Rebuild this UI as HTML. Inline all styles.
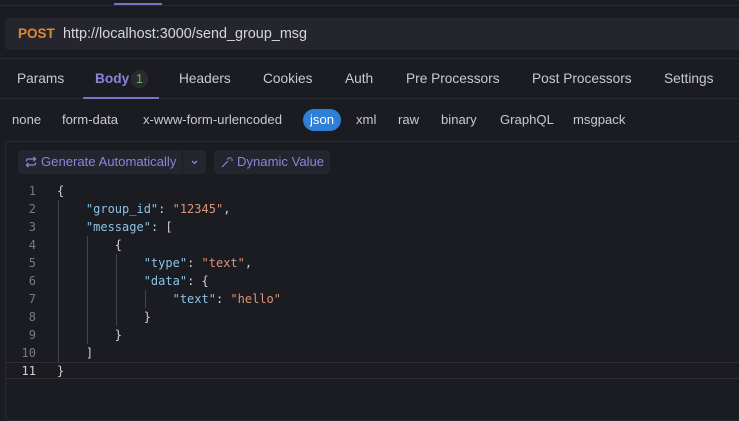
<!DOCTYPE html>
<html><head><meta charset="utf-8"><style>
*{margin:0;padding:0;box-sizing:border-box}
body{width:739px;height:411px;background:#1b1b22;font-family:"Liberation Sans",sans-serif;color:#c9c9d0;position:relative;overflow:hidden;font-size:13.7px}
.abs{position:absolute}
.t{font-size:13.1px;top:112px}
.code{font-family:"DejaVu Sans Mono","Liberation Mono",monospace;font-size:12px;white-space:pre}
.ln{position:absolute;left:0;width:36px;text-align:right;color:#7a7a82}
.k{color:#8cc2e8}.s{color:#d9967a}.p{color:#d0d0d4}
.g{position:absolute;width:1px;background:#44444c}
</style></head><body>
<div class="abs" style="left:0;top:5px;width:739px;height:1px;background:#2a2a33"></div>
<div class="abs" style="left:114px;top:3px;width:48px;height:2px;background:#7a74c8"></div>
<div class="abs" style="left:5px;top:18px;width:740px;height:32px;background:#25252d;border-radius:4px"></div>
<div class="abs" style="left:18px;top:26px;font-weight:bold;color:#e0892e;font-size:13.5px">POST</div>
<div class="abs" style="left:63px;top:26px;color:#d6d6dc;font-size:14.4px">http://localhost:3000/send_group_msg</div>
<div class="abs" style="left:0;top:58px;width:739px;height:1px;background:#2a2a33"></div>
<div class="abs" style="top:71px;left:17px">Params</div>
<div class="abs" style="top:71px;left:95px;color:#8b84d8;font-weight:bold">Body</div>
<div class="abs" style="top:70px;left:131px;width:17px;height:18px;border-radius:9px;background:#2a2a30;color:#5cbf4a;text-align:center;line-height:18px;font-size:12.5px">1</div>
<div class="abs" style="top:71px;left:179px">Headers</div>
<div class="abs" style="top:71px;left:263px">Cookies</div>
<div class="abs" style="top:71px;left:345px">Auth</div>
<div class="abs" style="top:71px;left:406px">Pre Processors</div>
<div class="abs" style="top:71px;left:532px">Post Processors</div>
<div class="abs" style="top:71px;left:664px">Settings</div>
<div class="abs" style="left:0;top:98px;width:739px;height:1px;background:#2a2a33"></div>
<div class="abs" style="left:83px;top:97px;width:76px;height:2px;background:#7a74c8"></div>
<div class="abs t" style="left:12px">none</div>
<div class="abs t" style="left:62px">form-data</div>
<div class="abs t" style="left:143px">x-www-form-urlencoded</div>
<div class="abs" style="top:109px;left:303px;width:38px;height:22px;border-radius:11px;background:#2f7fd6;color:#fff;text-align:center;line-height:22px;font-size:13.1px">json</div>
<div class="abs t" style="left:356px">xml</div>
<div class="abs t" style="left:398px">raw</div>
<div class="abs t" style="left:441px">binary</div>
<div class="abs t" style="left:500px">GraphQL</div>
<div class="abs t" style="left:573px">msgpack</div>
<div class="abs" style="left:5px;top:141px;width:740px;height:280px;border:1px solid #2a2a33;border-radius:5px"></div>
<div class="abs" style="left:18px;top:150px;width:188px;height:24px;background:#25252f;border-radius:4px"></div>
<div class="abs" style="left:182px;top:150px;width:1px;height:24px;background:#1b1b22"></div>
<svg class="abs" style="left:25px;top:156px" width="12" height="12" viewBox="0 0 12 12" fill="none" stroke="#8b84d8" stroke-width="1.3"><path d="M1.5 5.5V4.5a1.5 1.5 0 0 1 1.5-1.5H10.5M8.5 1l2 2-2 2M10.5 6.5v1a1.5 1.5 0 0 1-1.5 1.5H1.5M3.5 11l-2-2 2-2"/></svg>
<div class="abs" style="left:41px;top:154px;color:#8b84d8;font-size:13.1px">Generate Automatically</div>
<svg class="abs" style="left:190px;top:158px" width="9" height="8" viewBox="0 0 9 8" fill="none" stroke="#8b84d8" stroke-width="1.3"><path d="M2 3l2.5 2.5L7 3"/></svg>
<div class="abs" style="left:214px;top:150px;width:116px;height:24px;background:#25252f;border-radius:4px"></div>
<svg class="abs" style="left:221px;top:156px" width="12" height="12" viewBox="0 0 12 12" fill="none" stroke="#8b84d8" stroke-width="1.2"><path d="M1 11l6-6M8 1v2M10 4h2M9.5 2.5l1-1M6 2.5l1 1"/></svg>
<div class="abs" style="left:237px;top:154px;color:#8b84d8;font-size:13.1px">Dynamic Value</div>
<div class="abs" style="left:6px;top:362px;width:733px;height:17px;border-top:1px solid #2e2e33;border-bottom:1px solid #2e2e33"></div>
<div class="g" style="left:58px;top:200px;height:162px"></div>
<div class="g" style="left:87px;top:236px;height:108px"></div>
<div class="g" style="left:116px;top:254px;height:72px"></div>
<div class="g" style="left:145px;top:290px;height:18px"></div>
<div class="abs code" style="left:0;top:182px;width:739px;line-height:18px">
<div class="ln" style="top:0">1</div><div class="ln" style="top:18px">2</div><div class="ln" style="top:36px">3</div><div class="ln" style="top:54px">4</div><div class="ln" style="top:72px">5</div><div class="ln" style="top:90px">6</div><div class="ln" style="top:108px">7</div><div class="ln" style="top:126px">8</div><div class="ln" style="top:144px">9</div><div class="ln" style="top:162px">10</div><div class="ln" style="top:180px;color:#d0d0d4">11</div>
<div class="abs" style="left:57px;top:0"><span class="p">{</span>
    <span class="k">"group_id"</span><span class="p">: </span><span class="s">"12345"</span><span class="p">,</span>
    <span class="k">"message"</span><span class="p">: [</span>
        <span class="p">{</span>
            <span class="k">"type"</span><span class="p">: </span><span class="s">"text"</span><span class="p">,</span>
            <span class="k">"data"</span><span class="p">: {</span>
                <span class="k">"text"</span><span class="p">: </span><span class="s">"hello"</span>
            <span class="p">}</span>
        <span class="p">}</span>
    <span class="p">]</span>
<span class="p">}</span></div>
</div>
</body></html>
